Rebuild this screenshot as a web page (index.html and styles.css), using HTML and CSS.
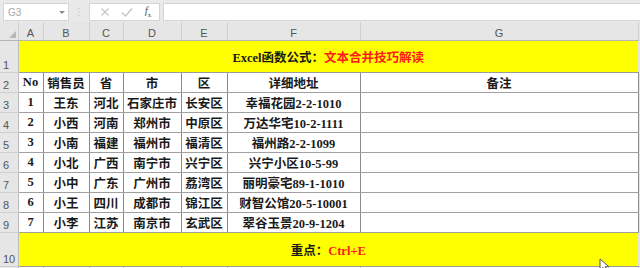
FILE: index.html
```html
<!DOCTYPE html>
<html lang="zh-CN">
<head>
    <meta charset="UTF-8">
    <title>Excel函数公式：文本合并技巧解读</title>
    <link rel="stylesheet" href="styles.css">
</head>
<body>
    <div class="formula-bar">
        <div class="name-box">
            <span>G3</span>
            <span class="caret"></span>
        </div>
        <div class="grip">⋮</div>
        <div class="fx-box">
            <svg width="10" height="10" viewBox="0 0 10 10"><path d="M1.5 1.5 L8.5 8.5 M8.5 1.5 L1.5 8.5" stroke="#c4c4c4" stroke-width="1.2"/></svg>
            <svg width="12" height="10" viewBox="0 0 12 10"><path d="M1 5.5 L4.5 9 L11 1.5" stroke="#c4c4c4" stroke-width="1.4" fill="none"/></svg>
            <span class="fx"><i>f</i><sub>x</sub></span>
        </div>
        <div class="formula-input"></div>
    </div>

    <table class="sheet">
        <colgroup>
            <col class="c-rh"><col class="c-a"><col class="c-b"><col class="c-c"><col class="c-d"><col class="c-e"><col class="c-f"><col class="c-g">
        </colgroup>
        <tr class="col-head">
            <th class="corner"><span class="tri"></span></th>
            <th>A</th><th>B</th><th>C</th><th>D</th><th>E</th><th>F</th><th>G</th>
        </tr>
        <tr class="r-title">
            <th class="rh">1</th>
            <td colspan="7" class="banner">Excel函数公式：<span class="red">文本合并技巧解读</span></td>
        </tr>
        <tr class="r-data">
            <th class="rh">2</th>
            <td>No</td><td>销售员</td><td>省</td><td>市</td><td>区</td><td>详细地址</td><td>备注</td>
        </tr>
        <tr class="r-data">
            <th class="rh">3</th>
            <td>1</td><td>王东</td><td>河北</td><td>石家庄市</td><td>长安区</td><td>幸福花园2-2-1010</td><td></td>
        </tr>
        <tr class="r-data">
            <th class="rh">4</th>
            <td>2</td><td>小西</td><td>河南</td><td>郑州市</td><td>中原区</td><td>万达华宅10-2-1111</td><td></td>
        </tr>
        <tr class="r-data">
            <th class="rh">5</th>
            <td>3</td><td>小南</td><td>福建</td><td>福州市</td><td>福清区</td><td>福州路2-2-1099</td><td></td>
        </tr>
        <tr class="r-data">
            <th class="rh">6</th>
            <td>4</td><td>小北</td><td>广西</td><td>南宁市</td><td>兴宁区</td><td>兴宁小区10-5-99</td><td></td>
        </tr>
        <tr class="r-data">
            <th class="rh">7</th>
            <td>5</td><td>小中</td><td>广东</td><td>广州市</td><td>荔湾区</td><td>丽明豪宅89-1-1010</td><td></td>
        </tr>
        <tr class="r-data">
            <th class="rh">8</th>
            <td>6</td><td>小王</td><td>四川</td><td>成都市</td><td>锦江区</td><td>财智公馆20-5-10001</td><td></td>
        </tr>
        <tr class="r-data">
            <th class="rh">9</th>
            <td>7</td><td>小李</td><td>江苏</td><td>南京市</td><td>玄武区</td><td>翠谷玉景20-9-1204</td><td></td>
        </tr>
        <tr class="r-key">
            <th class="rh">10</th>
            <td colspan="7" class="banner">重点：<span class="red">Ctrl+E</span></td>
        </tr>
        <tr class="r-data r-blank">
            <th class="rh"></th>
            <td></td><td></td><td></td><td></td><td></td><td></td><td></td>
        </tr>
    </table>

    <svg class="cursor" width="12" height="14" viewBox="0 0 12 14">
        <path d="M1 1 L1 12 L4 9.5 L6 13 L7.8 12.2 L6 8.8 L10 8.8 Z" fill="#fff" stroke="#555" stroke-width="1"/>
    </svg>
</body>
</html>
```

FILE: styles.css
```css
body {
    margin: 0;
    width: 640px;
    height: 268px;
    overflow: hidden;
    background-color: #e6e6e6;
    position: relative;
    font-family: "Liberation Serif", "Noto Sans CJK SC", serif;
}
.formula-bar {
    height: 22px;
    display: flex;
    align-items: flex-start;
    padding-top: 3px;
    box-sizing: border-box;
    background-color: #e9e9e9;
}
.name-box {
    width: 66px;
    height: 18px;
    margin-left: 3px;
    box-sizing: border-box;
    background-color: #fff;
    border: 1px solid #d4d4d4;
    display: flex;
    align-items: center;
    justify-content: space-between;
    padding: 0 3px 0 4px;
    font-family: "Liberation Sans", sans-serif;
    font-size: 10px;
    color: #a8a8a8;
}
.caret {
    width: 0;
    height: 0;
    border-left: 3px solid transparent;
    border-right: 3px solid transparent;
    border-top: 3px solid #8a8a8a;
}
.grip {
    width: 20px;
    text-align: center;
    color: #c0c0c0;
    font-family: "DejaVu Sans", sans-serif;
    font-size: 10px;
    line-height: 18px;
}
.fx-box {
    width: 71px;
    height: 18px;
    box-sizing: border-box;
    background-color: #fff;
    border: 1px solid #d4d4d4;
    display: flex;
    align-items: center;
    justify-content: space-around;
    padding: 0 2px 0 4px;
}
.fx {
    font-family: "Liberation Serif", serif;
    font-size: 11px;
    color: #555;
}
.fx sub {
    font-size: 7px;
}
.formula-input {
    flex: 1;
    height: 18px;
    margin-left: 3px;
    background-color: #fff;
    border: 1px solid #d4d4d4;
    border-right: none;
    box-sizing: border-box;
}
.sheet {
    table-layout: fixed;
    border-collapse: collapse;
    width: 638px;
}
.c-rh { width: 18px; }
.c-a { width: 25px; }
.c-b { width: 46px; }
.c-c { width: 34px; }
.c-d { width: 58px; }
.c-e { width: 46px; }
.c-f { width: 133px; }
.c-g { width: 278px; }
.sheet th,
.sheet td {
    padding: 0;
    overflow: hidden;
    white-space: nowrap;
}
.col-head th {
    height: 18px;
    background-color: #e6e6e6;
    font-family: "Liberation Sans", "Open Sans", sans-serif;
    font-weight: normal;
    font-size: 11px;
    color: #555;
    border-right: 1px solid #cfcfcf;
    border-bottom: 1px solid #b5b5b5;
    vertical-align: bottom;
    line-height: 13px;
}
.corner {
    position: relative;
}
.tri {
    position: absolute;
    right: 2px;
    bottom: 2px;
    width: 0;
    height: 0;
    border-left: 7px solid transparent;
    border-bottom: 7px solid #b8b8b8;
}
.rh {
    background-color: #e6e6e6;
    font-family: "Liberation Sans", "Open Sans", sans-serif;
    font-weight: normal;
    font-size: 11px;
    color: #555;
    text-align: left;
    padding-left: 3px !important;
    vertical-align: bottom;
    line-height: 14px;
    border-right: 1px solid #bcbcbc;
    border-bottom: 1px solid #d0d0d0;
}
.r-title { height: 32px; }
.r-data { height: 20px; }
.r-key { height: 34px; }
.banner {
    background-color: #ffff00;
    text-align: center;
    font-size: 12.5px;
    font-weight: bold;
    color: #1a1a1a;
    border-bottom: 1px solid #9a9a9a;
}
.red {
    color: #ff1a1a;
}
.r-data td {
    background-color: #fff;
    text-align: center;
    font-size: 12.5px;
    font-weight: bold;
    color: #1a1a1a;
    border-right: 1px solid #8c8c8c;
    border-bottom: 1px solid #a0a0a0;
}
.r-blank td {
    border-right-color: #d4d4d4;
    border-bottom: none;
}
.cursor {
    position: absolute;
    left: 599px;
    top: 258px;
}
```
